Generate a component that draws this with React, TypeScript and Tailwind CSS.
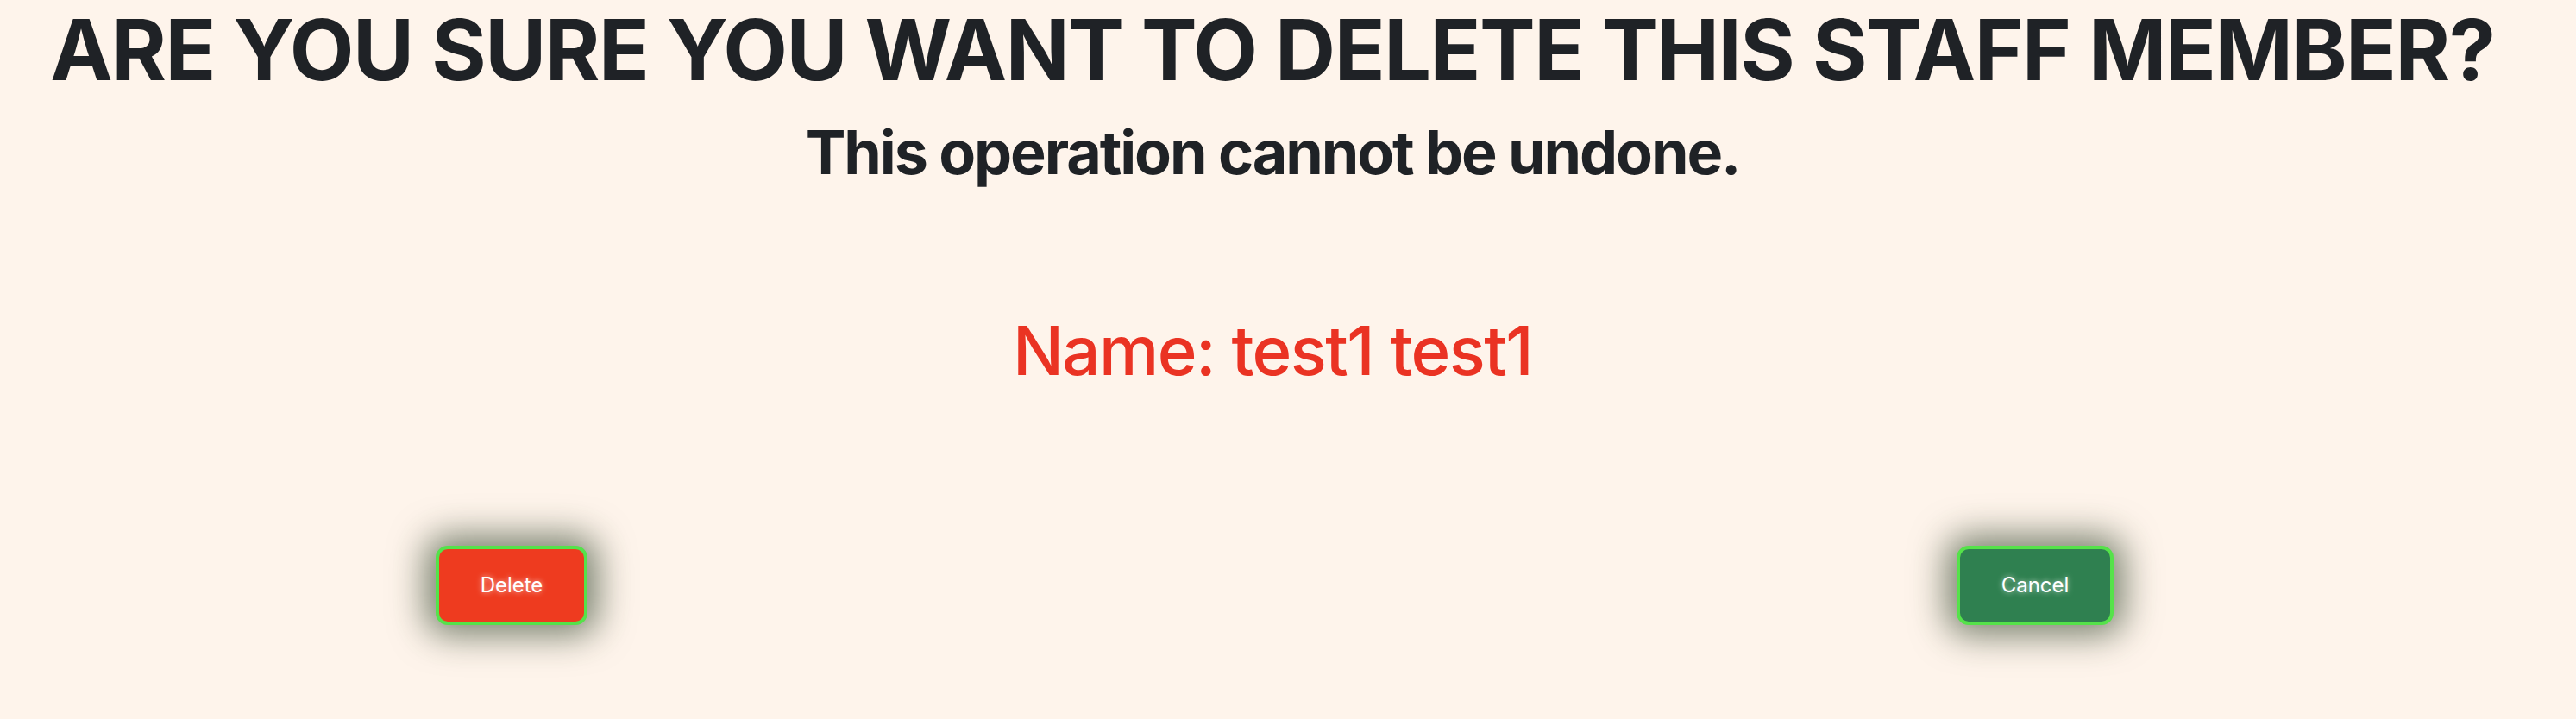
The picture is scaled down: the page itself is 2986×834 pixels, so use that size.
import React from "react";

export default function App() {
  return (
    <div
      className="min-h-[834px] w-full bg-[#fef4eb] text-[#1f2226]"
      style={{ fontFamily: "Inter, 'Noto Sans', sans-serif" }}
    >
      <div className="flex w-[2950px] flex-col items-center">
        <h1 className="mt-[3px] text-[97px] font-bold leading-[110px] tracking-[-0.015em] whitespace-nowrap">
          ARE YOU SURE YOU WANT TO DELETE THIS STAFF MEMBER?
        </h1>
        <h2 className="mt-[24px] text-[70px] font-bold leading-[80px] tracking-[-0.03em] whitespace-nowrap">
          This operation cannot be undone.
        </h2>
        <p className="mt-[145px] text-[78px] font-medium leading-[90px] tracking-[-0.02em] text-[#ea3323] whitespace-nowrap">
          Name: test1 test1
        </p>
        <div className="mt-[181px] flex w-full justify-between pl-[505px] pr-[500px]">
          <button className="h-[92px] w-[176px] rounded-[14px] border-4 border-[#55e24a] bg-[#ee3b1f] text-[24px] font-normal text-white shadow-[0_0_40px_12px_rgba(35,55,30,0.6)] [text-shadow:0_0_6px_rgba(255,255,255,0.7)]">
            Delete
          </button>
          <button className="h-[92px] w-[182px] rounded-[14px] border-4 border-[#55e24a] bg-[#2f8050] text-[24px] font-normal text-white shadow-[0_0_40px_12px_rgba(35,55,30,0.6)] [text-shadow:0_0_6px_rgba(255,255,255,0.7)]">
            Cancel
          </button>
        </div>
      </div>
    </div>
  );
}
